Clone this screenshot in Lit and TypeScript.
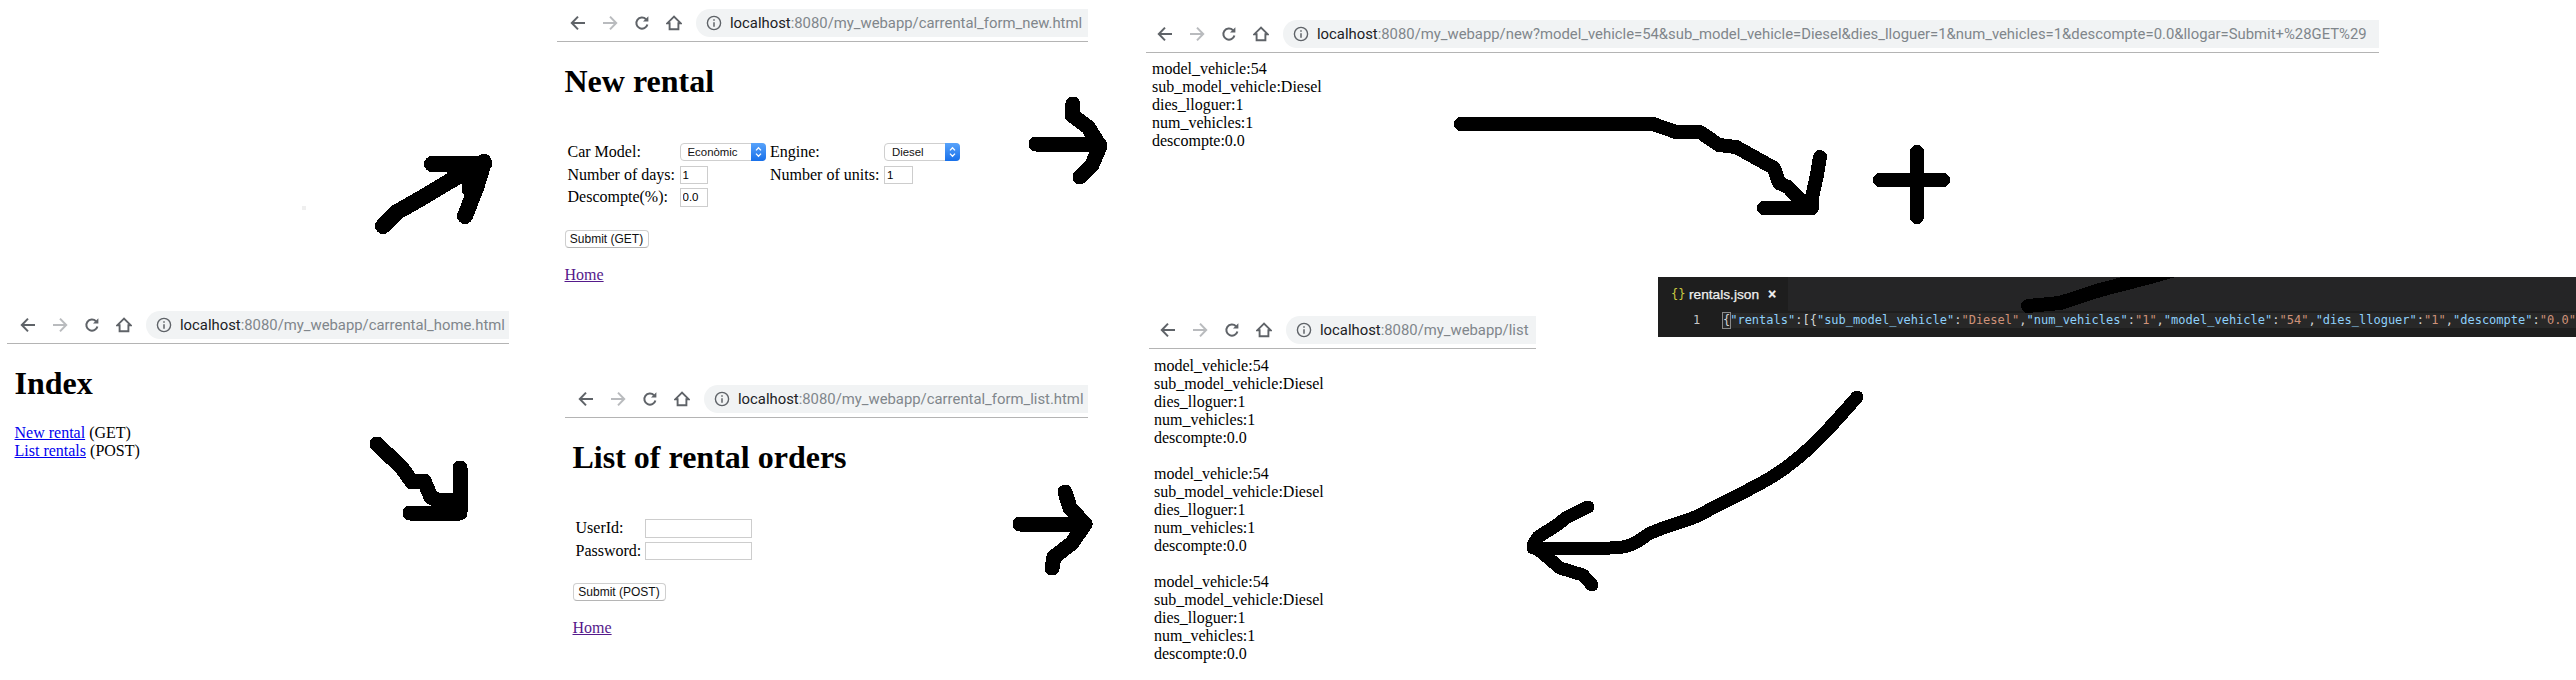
import { LitElement, css, html, svg } from 'lit';
import { customElement, property } from 'lit/decorators.js';

const BACK = svg`<path d="M15 8H2.2M8 1.6 1.8 8 8 14.4" fill="none" stroke="currentColor" stroke-width="2"/>`;
const RELOAD = svg`<path d="M13.4 9.4A5.6 5.6 0 1 1 12 4.2" fill="none" stroke="currentColor" stroke-width="2"/><path d="M14.4 1.2V6.6H9z" fill="currentColor"/>`;
const HOME = svg`<path d="M8 1.6 1.4 8.2H3.6V14.2H12.4V8.2H14.6Z" fill="none" stroke="currentColor" stroke-width="1.9"/>`;
const INFO = svg`<circle cx="8" cy="8" r="6.6" fill="none" stroke="currentColor" stroke-width="1.4"/><path d="M8 7.2V11.8M8 4.2V5.8" fill="none" stroke="currentColor" stroke-width="1.5"/>`;

@customElement('browser-bar')
class BrowserBar extends LitElement {
  static styles = css`
    :host {
      display: flex;
      align-items: flex-start;
      box-sizing: border-box;
      height: 39px;
      padding-top: 6px;
      border-bottom: 1px solid #b4b4b4;
      overflow: hidden;
    }
    .nav {
      display: flex;
      flex: none;
      gap: 4px;
      height: 28px;
      margin-right: 8px;
    }
    .slot {
      display: flex;
      align-items: center;
      justify-content: center;
      width: 28px;
      color: #5f6368;
    }
    .slot.off {
      color: #b9bbbe;
    }
    .slot svg {
      width: 16px;
      height: 16px;
    }
    .pill {
      display: flex;
      flex: 1;
      align-items: center;
      min-width: 0;
      height: 28px;
      padding-left: 10px;
      background: #f1f3f4;
      border-radius: 14px 0 0 14px;
      font: 14.85px/28px Roboto, sans-serif;
      color: #80868b;
      white-space: nowrap;
      overflow: hidden;
    }
    .pill svg {
      flex: none;
      width: 16px;
      height: 16px;
      margin-right: 8px;
      color: #5f6368;
    }
    b {
      font-weight: 400;
      color: #202124;
    }
  `;

  @property() path = '';
  @property({ type: Number }) pad = 7;

  render() {
    return html`<div class="nav" style="margin-left:${this.pad}px">
        <span class="slot"><svg viewBox="0 0 16 16">${BACK}</svg></span>
        <span class="slot off"><svg viewBox="0 0 16 16" style="transform:scaleX(-1)">${BACK}</svg></span>
        <span class="slot"><svg viewBox="0 0 16 16">${RELOAD}</svg></span>
        <span class="slot"><svg viewBox="0 0 16 16">${HOME}</svg></span>
      </div>
      <div class="pill">
        <svg viewBox="0 0 16 16">${INFO}</svg><b>localhost</b>:8080/my_webapp/${this.path}
      </div>`;
  }
}

const ROWS = [
  'model_vehicle:54',
  'sub_model_vehicle:Diesel',
  'dies_lloguer:1',
  'num_vehicles:1',
  'descompte:0.0',
];

// freehand marker strokes, in page coordinates
const STROKES = [
  { w: 16, d: 'M383 226 397 212 420 199 450 181 484 162M432 164H484M484 162 476 188 465 216M455 173H470V190' },
  { w: 15, d: 'M377 444 402 468 412 482 424 481 431 497 460 512M460 468V512M410 513H460M445 500H455' },
  { w: 15, d: 'M1036 144H1099M1073 104 1072 115 1088 127 1100 146 1092 165 1080 177' },
  { w: 15, d: 'M1020 524H1084M1065 492 1070 508 1085 524 1072 543 1054 557 1052 568' },
  { w: 14, d: 'M1461 124H1653L1676 132H1700L1719 145 1736 147 1774 168 1779 183 1788 187 1807 207M1820 157 1817 175 1812 197V208M1764 208H1812' },
  { w: 14, d: 'M1917 152V217M1880 180H1943' },
  { w: 13, d: 'M1857 397C1830 428 1805 457 1770 478C1745 493 1720 503 1700 515C1680 524 1660 527 1647 535C1635 544 1628 548 1610 548H1533M1588 507 1567 517 1557 525 1538 537 1533 545 1560 568 1583 575 1592 585' },
];

@customElement('app-root')
class AppRoot extends LitElement {
  static styles = css`
    :host {
      display: block;
      position: relative;
      width: 2576px;
      height: 680px;
      overflow: hidden;
      background: #fff;
      color: #000;
      font: 16px/18px 'Liberation Serif', serif;
    }
    .shot {
      position: absolute;
    }
    .page {
      padding: 21px 7.5px 0;
    }
    h1 {
      margin: 0 0 21px;
      font-size: 32px;
      line-height: 36px;
      font-weight: 700;
    }
    p {
      margin: 0;
    }
    .links {
      margin-top: 22.5px;
    }
    a {
      color: #0000ee;
      text-decoration: underline;
    }
    a.seen {
      display: block;
      width: max-content;
      margin-top: 18px;
      color: #551a8b;
    }
    .form {
      display: grid;
      align-items: center;
      grid-auto-rows: 22.6px;
      margin: 42px 0 21px 3px;
    }
    .new-form {
      grid-template-columns: 112px 90.5px 114px auto;
    }
    .list-form {
      grid-template-columns: 69.5px auto;
    }
    input {
      box-sizing: border-box;
      height: 18.5px;
      margin: 0;
      padding: 0 2px;
      border: 1px solid #cdcdcd;
      border-radius: 0;
      font: 11.5px 'Liberation Sans', sans-serif;
      color: #000;
      background: #fff;
      outline: none;
    }
    .num {
      width: 28.5px;
    }
    .wide {
      width: 107px;
    }
    .select {
      position: relative;
      display: block;
      height: 18px;
    }
    select {
      display: block;
      appearance: none;
      box-sizing: border-box;
      width: 100%;
      height: 100%;
      margin: 0;
      padding: 0 16px 0 7px;
      border: 1px solid #cfcfcf;
      border-radius: 4px;
      background: #fff;
      font: 11.4px 'Liberation Sans', sans-serif;
      color: #111;
    }
    .caret {
      position: absolute;
      top: 0;
      right: 0;
      width: 15px;
      height: 18px;
      border-radius: 0 4px 4px 0;
      background: linear-gradient(#58a3fb, #1870ea);
    }
    .caret svg {
      display: block;
      width: 15px;
      height: 18px;
    }
    button {
      display: block;
      box-sizing: border-box;
      height: 18px;
      margin: 0;
      padding: 0;
      border: 1px solid #cfcfcf;
      border-bottom-color: #b5b5b5;
      border-radius: 4px;
      background: #fff;
      font: 12px 'Liberation Sans', sans-serif;
      color: #111;
    }
    .rows {
      padding-top: 7px;
    }
    .rows.low {
      padding-top: 8px;
    }
    .editor {
      position: absolute;
      left: 1658px;
      top: 277px;
      width: 918px;
      height: 60px;
      overflow: hidden;
      background: #1e1e1e;
    }
    .tabs {
      height: 34px;
      background: #252526;
    }
    .tab {
      display: flex;
      align-items: center;
      box-sizing: border-box;
      width: 130px;
      height: 34px;
      padding-left: 13px;
      background: #1e1e1e;
      color: #f0f0f0;
      font: 13.7px 'Liberation Sans', sans-serif;
      -webkit-text-stroke: 0.25px #f0f0f0;
    }
    .braces {
      width: 18px;
      color: #cbcb41;
      font: 12px 'DejaVu Sans Mono', monospace;
      -webkit-text-stroke: 0;
    }
    .close {
      margin-left: 9px;
      font-size: 14px;
      font-weight: 700;
    }
    .line {
      display: flex;
      margin-top: 2px;
      height: 15px;
      font: 12px/15px 'DejaVu Sans Mono', monospace;
      white-space: nowrap;
    }
    .gutter {
      flex: none;
      width: 65px;
      padding-left: 35px;
      box-sizing: border-box;
      color: #c6c6c6;
    }
    .code {
      flex: 1;
      color: #d4d4d4;
      background: #282828;
    }
    .cursor {
      display: inline-block;
      box-sizing: border-box;
      width: 7.2px;
      height: 15px;
      outline: 1px solid #8a8a8a;
    }
    .k {
      color: #8ed0fb;
    }
    .s {
      color: #ce9178;
    }
    .marks {
      position: absolute;
      left: 0;
      top: 0;
      pointer-events: none;
    }
    .marks path {
      fill: none;
      stroke: #000;
      stroke-linecap: round;
      stroke-linejoin: round;
    }
  `;

  private caret() {
    return html`<span class="caret"
      ><svg viewBox="0 0 15 18">
        <path d="M5 7.4 7.5 4.8 10 7.4M5 10.6 7.5 13.2 10 10.6" fill="none" stroke="#fff" stroke-width="1.3" /></svg
    ></span>`;
  }

  private select(value: string, width: number) {
    return html`<span class="select" style="width:${width}px">
      <select><option>${value}</option></select>${this.caret()}
    </span>`;
  }

  private rows(count: number) {
    const groups = [];
    for (let i = 0; i < count; i++) {
      groups.push(html`<p>${ROWS.map((r) => html`${r}<br />`)}${i < count - 1 ? html`<br />` : ''}</p>`);
    }
    return groups;
  }

  private json() {
    const pair = (k: string, v: string) =>
      html`<span class="k">"${k}"</span>:<span class="s">"${v}"</span>`;
    return html`<div class="editor">
      <div class="tabs">
        <div class="tab"><span class="braces">{}</span>rentals.json<span class="close">×</span></div>
      </div>
      <div class="line">
        <span class="gutter">1</span>
        <span class="code"
          ><span class="cursor">{</span><span class="k">"rentals"</span>:[{${pair('sub_model_vehicle', 'Diesel')},${pair(
            'num_vehicles',
            '1'
          )},${pair('model_vehicle', '54')},${pair('dies_lloguer', '1')},${pair('descompte', '0.0')}</span
        >
      </div>
      <svg class="marks" width="918" height="60" shape-rendering="crispEdges">
        <path stroke-width="14" d="M370 29 402 26 442 13 492 0 520 -8" />
      </svg>
    </div>`;
  }

  render() {
    return html`
      <section class="shot" style="left:7px;top:305px;width:502px">
        <browser-bar path="carrental_home.html"></browser-bar>
        <div class="page">
          <h1>Index</h1>
          <p class="links"><a href="#">New rental</a> (GET)<br /><a href="#">List rentals</a> (POST)</p>
        </div>
      </section>

      <section class="shot" style="left:557px;top:3px;width:531px">
        <browser-bar path="carrental_form_new.html"></browser-bar>
        <div class="page">
          <h1>New rental</h1>
          <div class="form new-form">
            <span>Car Model:</span>${this.select('Econòmic', 86)}
            <span>Engine:</span>${this.select('Diesel', 75.5)}
            <span>Number of days:</span><input class="num" value="1" />
            <span>Number of units:</span><input class="num" value="1" />
            <span>Descompte(%):</span><input class="num" value="0.0" />
          </div>
          <button style="width:84px">Submit (GET)</button>
          <a class="seen" href="#">Home</a>
        </div>
      </section>

      <section class="shot" style="left:565px;top:379px;width:523px">
        <browser-bar path="carrental_form_list.html"></browser-bar>
        <div class="page">
          <h1>List of rental orders</h1>
          <div class="form list-form">
            <span>UserId:</span><input class="wide" />
            <span>Password:</span><input class="wide" />
          </div>
          <button style="width:93px">Submit (POST)</button>
          <a class="seen" href="#">Home</a>
        </div>
      </section>

      <section class="shot" style="left:1146px;top:14px;width:1233px">
        <browser-bar
          pad="5"
          path="new?model_vehicle=54&sub_model_vehicle=Diesel&dies_lloguer=1&num_vehicles=1&descompte=0.0&llogar=Submit+%28GET%29"
        ></browser-bar>
        <div class="rows" style="padding-left:6px">${this.rows(1)}</div>
      </section>

      <section class="shot" style="left:1149px;top:310px;width:387px">
        <browser-bar pad="5" path="list"></browser-bar>
        <div class="rows low" style="padding-left:5px">${this.rows(3)}</div>
      </section>

      ${this.json()}

      <svg class="marks" width="2576" height="680" shape-rendering="crispEdges">
        <circle cx="304" cy="208" r="2.5" fill="#efefef" />
        ${STROKES.map((s) => svg`<path stroke-width=${s.w} d=${s.d} />`)}
      </svg>
    `;
  }
}

declare global {
  interface HTMLElementTagNameMap {
    'app-root': AppRoot;
    'browser-bar': BrowserBar;
  }
}
